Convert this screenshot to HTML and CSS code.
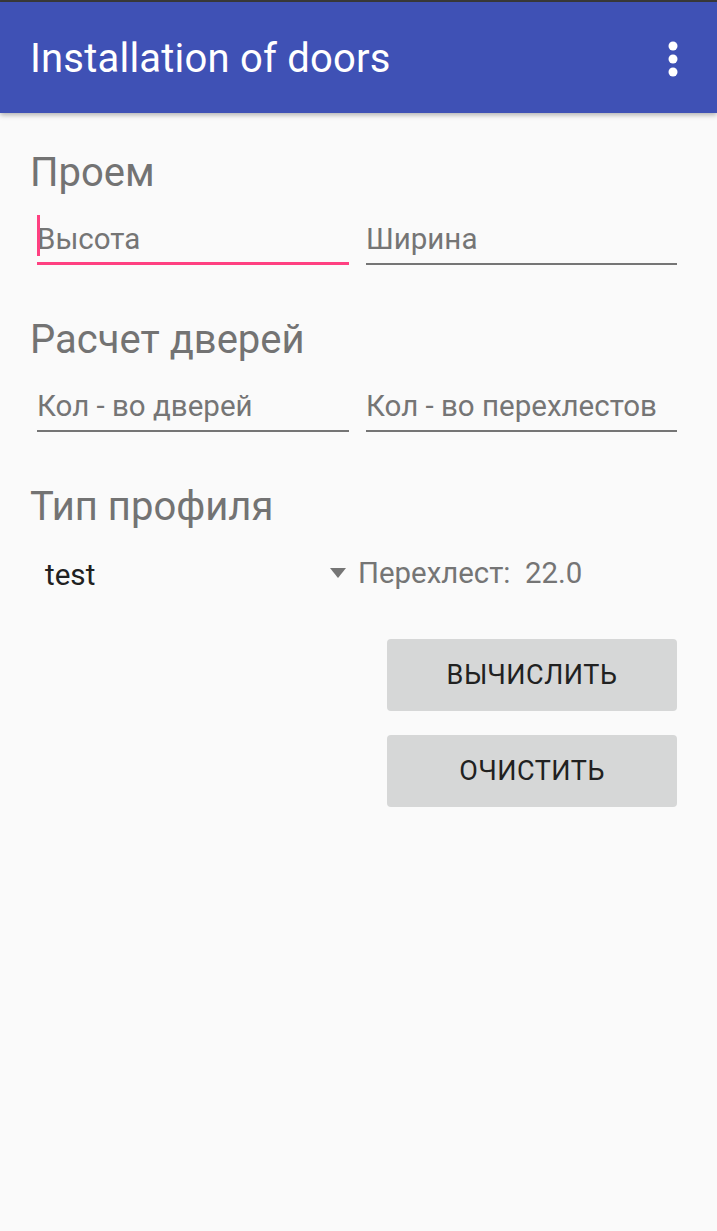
FILE: index.html
```html
<!DOCTYPE html>
<html lang="ru">
<head>
<meta charset="utf-8">
<link rel="stylesheet" href="styles.css">
</head>
<body>
<div class="status"></div>
<header class="appbar">
  <h1 class="title">Installation of doors</h1>
  <svg class="menu" width="12" height="36" viewBox="0 0 12 36"><circle cx="6" cy="5" r="4.5" fill="#fff"/><circle cx="6" cy="18" r="4.5" fill="#fff"/><circle cx="6" cy="31" r="4.5" fill="#fff"/></svg>
</header>
<main class="content">
  <section class="group">
    <h2 class="heading">Проем</h2>
    <div class="fields">
      <div class="field focused"><span class="cursor"></span><span class="hint">Высота</span></div>
      <div class="field"><span class="hint">Ширина</span></div>
    </div>
  </section>
  <section class="group">
    <h2 class="heading">Расчет дверей</h2>
    <div class="fields">
      <div class="field"><span class="hint">Кол - во дверей</span></div>
      <div class="field"><span class="hint">Кол - во перехлестов</span></div>
    </div>
  </section>
  <section class="group">
    <h2 class="heading">Тип профиля</h2>
    <div class="profile">
      <div class="spinner"><span class="value">test</span><span class="arrow"></span></div>
      <div class="overlap">Перехлест:&nbsp; 22.0</div>
    </div>
  </section>
  <div class="actions">
    <button class="btn">ВЫЧИСЛИТЬ</button>
    <button class="btn">ОЧИСТИТЬ</button>
  </div>
</main>
</body>
</html>
```
FILE: styles.css
```css
* { box-sizing: border-box; }
html, body { margin: 0; padding: 0; }
body {
  width: 717px;
  height: 1231px;
  background: #fafafa;
  font-family: Roboto, "Noto Sans", sans-serif;
  overflow: hidden;
}
.status { height: 2px; background: #3a3a3a; }
.appbar {
  height: 111px;
  background: #3f51b5;
  display: flex;
  align-items: center;
  justify-content: space-between;
  padding: 0 38px 0 30px;
  box-shadow: 0 2px 5px rgba(0,0,0,0.3);
  position: relative;
}
.title {
  margin: 0;
  color: #fff;
  font-weight: 400;
  font-size: 40px;
  letter-spacing: 0.2px;
  line-height: 1;
  padding-top: 2px;
}
.menu { display: block; margin-top: 2px; }
.content { padding: 36px 40px 0 30px; }
.heading {
  margin: 0;
  font-weight: 400;
  font-size: 40px;
  line-height: 48px;
  color: #737373;
}
.fields {
  display: grid;
  grid-template-columns: 312px 311px;
  gap: 17px;
  margin-left: 7px;
  margin-top: 18px;
  margin-bottom: 51px;
}
.field {
  height: 50px;
  border-bottom: 2px solid #757575;
  display: flex;
  align-items: flex-end;
  position: relative;
  padding-bottom: 7px;
}
.field.focused { border-bottom: 3px solid #ff4081; padding-bottom: 6px; }
.hint {
  font-size: 29.5px;
  line-height: 34px;
  color: #757575;
}
.cursor {
  position: absolute;
  left: 0;
  top: 0;
  width: 3px;
  height: 41px;
  background: #ff4081;
}
.profile {
  display: flex;
  align-items: center;
  margin-top: 22px;
  height: 40px;
}
.spinner {
  width: 328px;
  display: flex;
  align-items: center;
  justify-content: space-between;
  padding-left: 15px;
  padding-right: 12px;
}
.value { font-size: 29.6px; color: #212121; padding-top: 4px; }
.arrow {
  width: 0; height: 0;
  border-left: 8px solid transparent;
  border-right: 8px solid transparent;
  border-top: 10px solid #757575;
}
.overlap { font-size: 29.4px; color: #757575; }
.actions {
  display: flex;
  flex-direction: column;
  align-items: flex-end;
  gap: 24px;
  margin-top: 46px;
}
.btn {
  width: 290px;
  height: 72px;
  border: none;
  border-radius: 4px;
  background: #d6d7d7;
  color: #212121;
  font-family: Roboto, sans-serif;
  font-size: 27px;
  font-weight: 400;
  letter-spacing: 0.5px;
}
```
